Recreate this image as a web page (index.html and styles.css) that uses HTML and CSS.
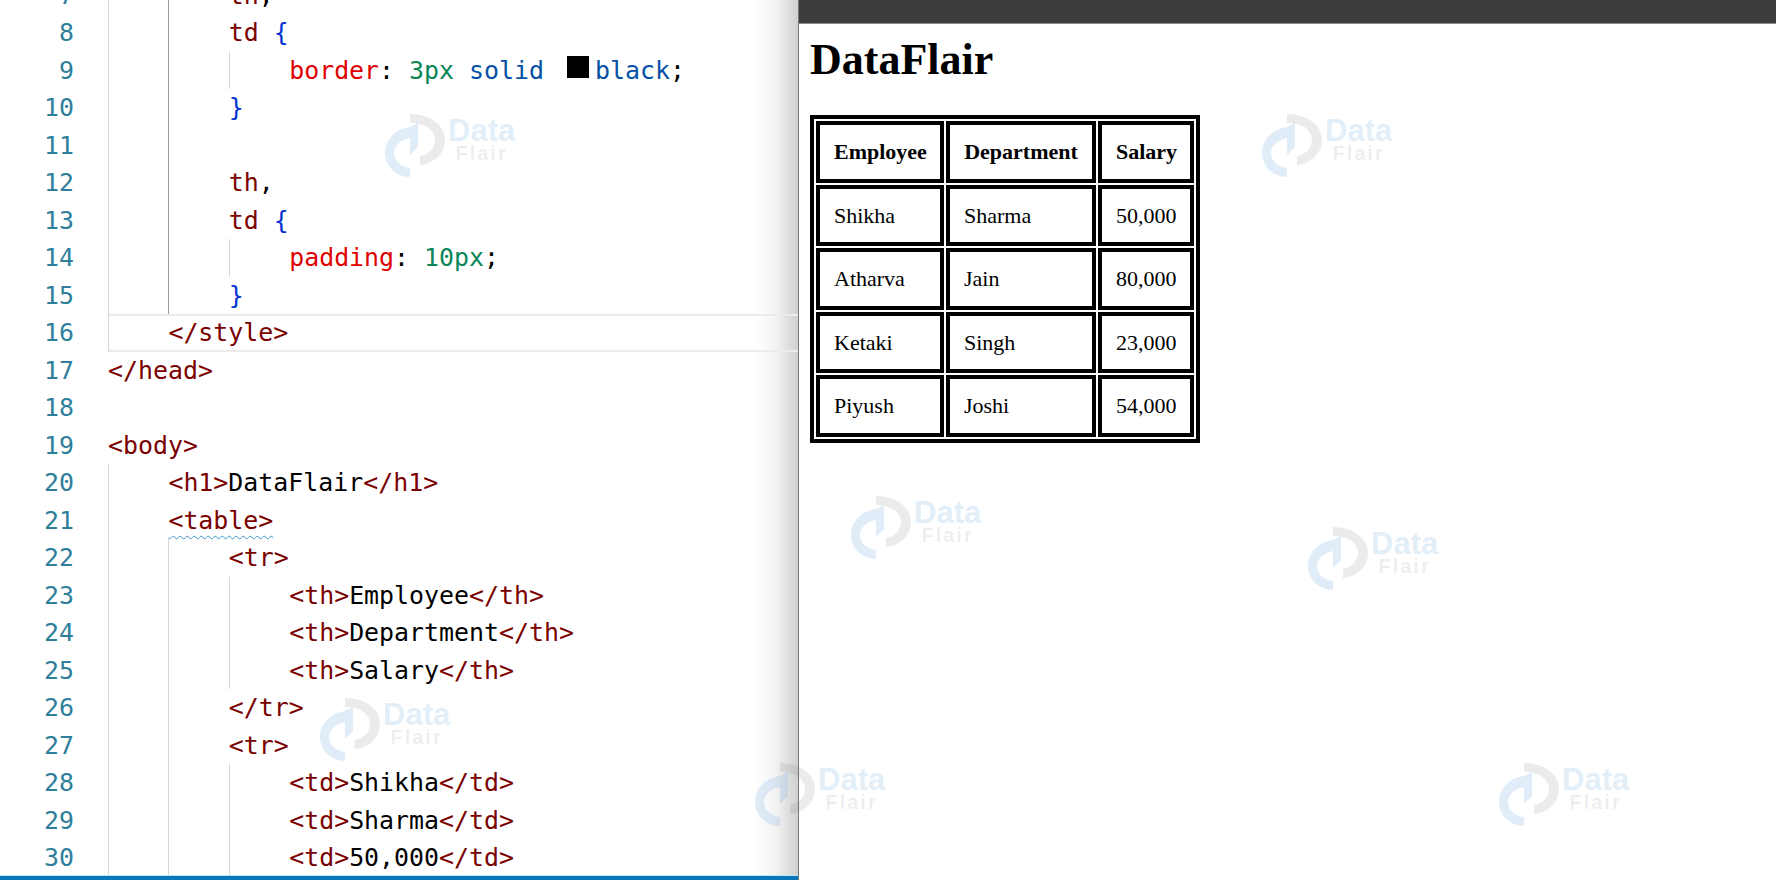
FILE: index.html
```html
<!DOCTYPE html>
<html lang="en">
<head>
    <meta charset="UTF-8">
    <meta name="viewport" content="width=device-width, initial-scale=1.0">
    <title>DataFlair</title>
    <link rel="stylesheet" href="styles.css">
</head>
<body>
    <svg class="defs" width="0" height="0">
        <symbol id="mark" viewBox="0 0 60 63">
            <path class="mark-gray" d="M25 0C45 0 60 11 60 26C60 40 48 50 35 51L35 42C43 41 50 34 50 26C50 16 40 9 25 9Z"/>
            <path class="mark-blue" d="M33 9V33L25 41V24C15 26 9 32 9 39C9 47 16 53 25 54V63C11 63 0 52 0 39C0 26 10 15 25 13Z"/>
        </symbol>
    </svg>

    <div class="editor">
        <div class="code">
            <div class="line"><span class="num">7</span><div class="body"><i class="guide"></i><i class="guide active"></i><span class="text"><span class="tag">th</span>,</span></div></div>
            <div class="line"><span class="num">8</span><div class="body"><i class="guide"></i><i class="guide active"></i><span class="text"><span class="tag">td</span> <span class="brace">{</span></span></div></div>
            <div class="line"><span class="num">9</span><div class="body"><i class="guide"></i><i class="guide active"></i><i class="guide"></i><span class="text"><span class="prop">border</span>: <span class="val">3px</span> <span class="kw">solid</span> <span class="swatch"></span><span class="kw">black</span>;</span></div></div>
            <div class="line"><span class="num">10</span><div class="body"><i class="guide"></i><i class="guide active"></i><span class="text"><span class="brace">}</span></span></div></div>
            <div class="line"><span class="num">11</span><div class="body"><i class="guide"></i><i class="guide active"></i></div></div>
            <div class="line"><span class="num">12</span><div class="body"><i class="guide"></i><i class="guide active"></i><span class="text"><span class="tag">th</span>,</span></div></div>
            <div class="line"><span class="num">13</span><div class="body"><i class="guide"></i><i class="guide active"></i><span class="text"><span class="tag">td</span> <span class="brace">{</span></span></div></div>
            <div class="line"><span class="num">14</span><div class="body"><i class="guide"></i><i class="guide active"></i><i class="guide"></i><span class="text"><span class="prop">padding</span>: <span class="val">10px</span>;</span></div></div>
            <div class="line"><span class="num">15</span><div class="body"><i class="guide"></i><i class="guide active"></i><span class="text"><span class="brace">}</span></span></div></div>
            <div class="line"><span class="num">16</span><div class="body current"><i class="guide"></i><span class="text tag">&lt;/style&gt;</span></div></div>
            <div class="line"><span class="num">17</span><div class="body"><span class="text tag">&lt;/head&gt;</span></div></div>
            <div class="line"><span class="num">18</span><div class="body"></div></div>
            <div class="line"><span class="num">19</span><div class="body"><span class="text tag">&lt;body&gt;</span></div></div>
            <div class="line"><span class="num">20</span><div class="body"><i class="guide"></i><span class="text"><span class="tag">&lt;h1&gt;</span>DataFlair<span class="tag">&lt;/h1&gt;</span></span></div></div>
            <div class="line"><span class="num">21</span><div class="body"><i class="guide"></i><span class="text tag squiggle">&lt;table&gt;</span></div></div>
            <div class="line"><span class="num">22</span><div class="body"><i class="guide"></i><i class="guide"></i><span class="text tag">&lt;tr&gt;</span></div></div>
            <div class="line"><span class="num">23</span><div class="body"><i class="guide"></i><i class="guide"></i><i class="guide"></i><span class="text"><span class="tag">&lt;th&gt;</span>Employee<span class="tag">&lt;/th&gt;</span></span></div></div>
            <div class="line"><span class="num">24</span><div class="body"><i class="guide"></i><i class="guide"></i><i class="guide"></i><span class="text"><span class="tag">&lt;th&gt;</span>Department<span class="tag">&lt;/th&gt;</span></span></div></div>
            <div class="line"><span class="num">25</span><div class="body"><i class="guide"></i><i class="guide"></i><i class="guide"></i><span class="text"><span class="tag">&lt;th&gt;</span>Salary<span class="tag">&lt;/th&gt;</span></span></div></div>
            <div class="line"><span class="num">26</span><div class="body"><i class="guide"></i><i class="guide"></i><span class="text tag">&lt;/tr&gt;</span></div></div>
            <div class="line"><span class="num">27</span><div class="body"><i class="guide"></i><i class="guide"></i><span class="text tag">&lt;tr&gt;</span></div></div>
            <div class="line"><span class="num">28</span><div class="body"><i class="guide"></i><i class="guide"></i><i class="guide"></i><span class="text"><span class="tag">&lt;td&gt;</span>Shikha<span class="tag">&lt;/td&gt;</span></span></div></div>
            <div class="line"><span class="num">29</span><div class="body"><i class="guide"></i><i class="guide"></i><i class="guide"></i><span class="text"><span class="tag">&lt;td&gt;</span>Sharma<span class="tag">&lt;/td&gt;</span></span></div></div>
            <div class="line"><span class="num">30</span><div class="body"><i class="guide"></i><i class="guide"></i><i class="guide"></i><span class="text"><span class="tag">&lt;td&gt;</span>50,000<span class="tag">&lt;/td&gt;</span></span></div></div>
        </div>
        <div class="status-bar"></div>
    </div>

    <div class="preview">
        <div class="preview-bar"></div>
        <div class="preview-body">
            <h1>DataFlair</h1>
            <table>
                <tr><th class="col-first">Employee</th><th class="col-last">Department</th><th class="col-salary">Salary</th></tr>
                <tr><td>Shikha</td><td>Sharma</td><td>50,000</td></tr>
                <tr><td>Atharva</td><td>Jain</td><td>80,000</td></tr>
                <tr><td>Ketaki</td><td>Singh</td><td>23,000</td></tr>
                <tr><td>Piyush</td><td>Joshi</td><td>54,000</td></tr>
            </table>
        </div>
    </div>

    <!-- watermarks -->
    <div class="wm wm-1"><svg class="wm-mark"><use href="#mark"/></svg><div class="wm-text"><span class="wm-data">Data</span><span class="wm-flair">Flair</span></div></div>
    <div class="wm wm-2"><svg class="wm-mark"><use href="#mark"/></svg><div class="wm-text"><span class="wm-data">Data</span><span class="wm-flair">Flair</span></div></div>
    <div class="wm wm-3"><svg class="wm-mark"><use href="#mark"/></svg><div class="wm-text"><span class="wm-data">Data</span><span class="wm-flair">Flair</span></div></div>
    <div class="wm wm-4"><svg class="wm-mark"><use href="#mark"/></svg><div class="wm-text"><span class="wm-data">Data</span><span class="wm-flair">Flair</span></div></div>
    <div class="wm wm-5"><svg class="wm-mark"><use href="#mark"/></svg><div class="wm-text"><span class="wm-data">Data</span><span class="wm-flair">Flair</span></div></div>
    <div class="wm wm-6"><svg class="wm-mark"><use href="#mark"/></svg><div class="wm-text"><span class="wm-data">Data</span><span class="wm-flair">Flair</span></div></div>
    <div class="wm wm-7"><svg class="wm-mark"><use href="#mark"/></svg><div class="wm-text"><span class="wm-data">Data</span><span class="wm-flair">Flair</span></div></div>
</body>
</html>
```

FILE: styles.css
```css
* {
    margin: 0;
    padding: 0;
    box-sizing: border-box;
}

html, body {
    height: 100%;
    overflow: hidden;
}

body {
    display: flex;
    background-color: #ffffff;
}

.defs {
    position: absolute;
}

/* editor */
.editor {
    position: relative;
    width: 799px;
    height: 880px;
    overflow: hidden;
    border-right: 1px solid #777777;
    background-image: linear-gradient(to right, #ffffff 755px, #f4f4f4 775px, #cfcfcf 798px);
}

.code {
    margin-top: -23.25px;
    font-family: "DejaVu Sans Mono", "Liberation Mono", monospace;
    font-size: 24.9px;
    color: #000000;
}

.line {
    display: flex;
    height: 37.5px;
    line-height: 37.5px;
}

.num {
    width: 108px;
    padding-right: 34px;
    text-align: right;
    color: #2f7f9c;
    flex-shrink: 0;
}

.body {
    flex: 1;
    display: flex;
}

.body.current {
    box-shadow: inset 0 2px 0 #ebebeb, inset 0 -2px 0 #ebebeb;
}

.guide {
    width: 60.4px;
    flex-shrink: 0;
    border-left: 1px solid #d6d6d6;
}

.guide.active {
    border-left-color: #9a9a9a;
}

.text {
    white-space: pre;
}

.tag { color: #7a0000; }
.prop { color: #e00000; }
.val { color: #098658; }
.kw { color: #0451a5; }
.brace { color: #0431d0; }

.swatch {
    display: inline-block;
    width: 22px;
    height: 22px;
    margin: 0 6px 0 8px;
    background-color: #000000;
    vertical-align: 1px;
}

.squiggle {
    text-decoration: underline wavy #3794d8 1px;
    text-underline-offset: 6px;
}

.status-bar {
    position: absolute;
    left: 0;
    right: 0;
    bottom: 0;
    height: 4px;
    background-color: #0a78b8;
    box-shadow: 0 -1px 0 #bfe6f5;
}

/* browser preview */
.preview {
    flex: 1;
    display: flex;
    flex-direction: column;
}

.preview-bar {
    height: 24px;
    background-color: #3c3c3c;
    border-bottom: 1px solid #8a8a8a;
}

.preview-body {
    padding: 11px 0 0 11px;
    font-family: "Liberation Serif", "Times New Roman", serif;
    color: #000000;
}

h1 {
    font-size: 44px;
    line-height: 50px;
    font-weight: bold;
    margin-bottom: 30px;
}

table {
    width: 390px;
    table-layout: fixed;
    border: 4px solid #000000;
    border-spacing: 2px;
    font-size: 22px;
    line-height: 25.6px;
}

th, td {
    border: 4px solid #000000;
    padding: 14px;
}

td {
    text-align: left;
}

.col-first { width: 128px; }
.col-last { width: 150px; }
.col-salary { width: 96px; }

/* watermarks */
.wm {
    position: absolute;
    display: flex;
    width: 132px;
    height: 63px;
}

.wm-1 { left: 385px; top: 114px; }
.wm-2 { left: 1262px; top: 114px; }
.wm-3 { left: 851px; top: 496px; }
.wm-4 { left: 1308px; top: 527px; }
.wm-5 { left: 320px; top: 698px; }
.wm-6 { left: 755px; top: 763px; }
.wm-7 { left: 1499px; top: 763px; }

.wm-mark {
    width: 60px;
    height: 63px;
    flex-shrink: 0;
}

.mark-blue { fill: rgba(125, 180, 225, 0.24); }
.mark-gray { fill: rgba(120, 120, 120, 0.15); }

.wm-text {
    display: flex;
    flex-direction: column;
    align-items: center;
    padding: 1px 0 0 3px;
    font-family: "Liberation Sans", Arial, sans-serif;
    font-weight: bold;
}

.wm-data {
    font-size: 31px;
    line-height: 32px;
    color: rgba(125, 180, 225, 0.24);
}

.wm-flair {
    font-size: 20px;
    line-height: 12px;
    letter-spacing: 2px;
    color: rgba(120, 120, 120, 0.13);
}
```
